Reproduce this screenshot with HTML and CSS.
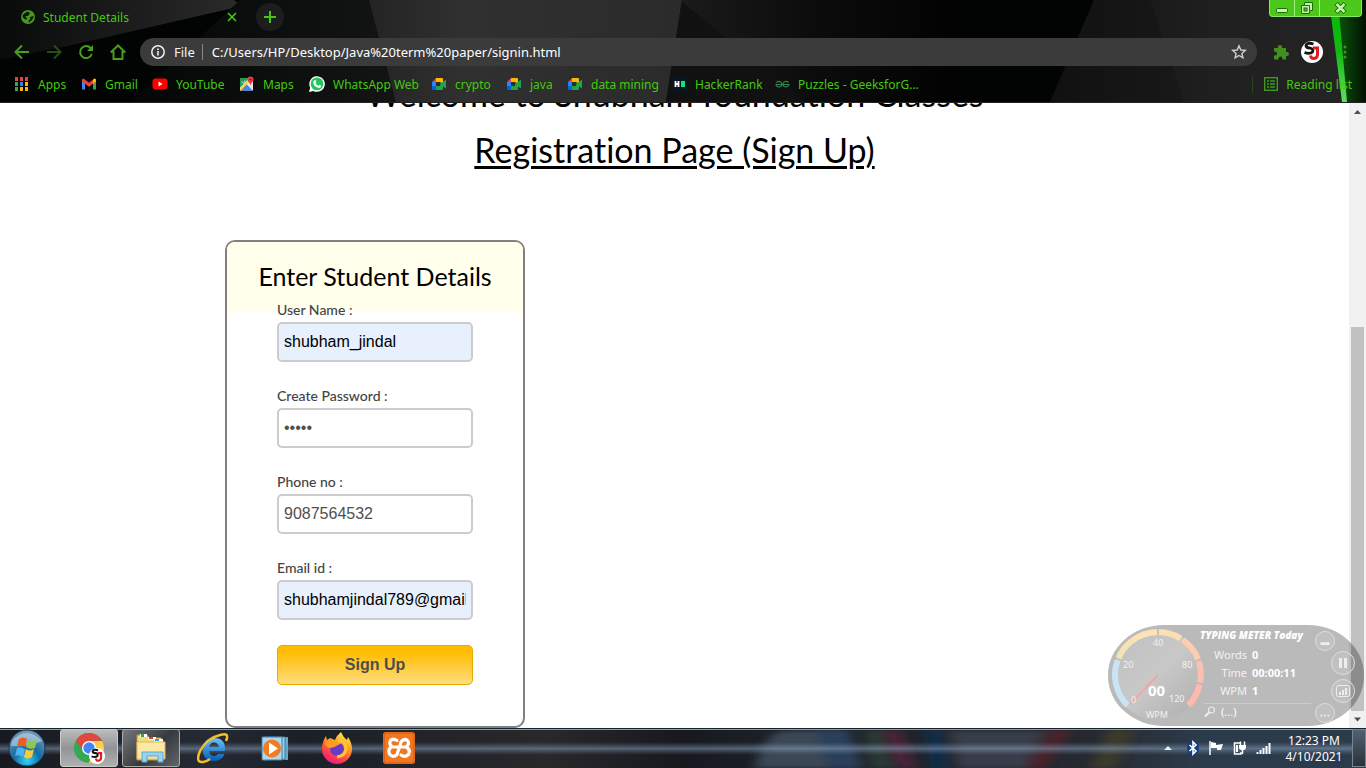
FILE: index.html
```html
<!DOCTYPE html>
<html lang="en">
<head>
<meta charset="utf-8">
<title>Student Details</title>
<link rel="stylesheet" href="styles.css">
</head>
<body>
<header class="browser">
  <svg class="theme" viewBox="0 0 1366 103" preserveAspectRatio="none" aria-hidden="true">
    <defs>
      <linearGradient id="tl" x1="0" x2="1"><stop offset="0" stop-color="#090a0a"/><stop offset="1" stop-color="#2b2b2b"/></linearGradient>
      <linearGradient id="mid" x1="0" x2="1"><stop offset="0" stop-color="#242424"/><stop offset=".3" stop-color="#303030"/><stop offset="1" stop-color="#2b2b2b"/></linearGradient>
      <linearGradient id="dark" x1="0" x2="1"><stop offset="0" stop-color="#1c1c1c"/><stop offset=".5" stop-color="#0c0c0c"/><stop offset="1" stop-color="#020202"/></linearGradient>
      <linearGradient id="right" x1="0" x2="1"><stop offset="0" stop-color="#111"/><stop offset=".5" stop-color="#1f1f1f"/><stop offset="1" stop-color="#252525"/></linearGradient>
      <linearGradient id="glow" x1="0" x2="1"><stop offset="0" stop-color="#0a5a0c"/><stop offset="1" stop-color="#021002"/></linearGradient>
      <linearGradient id="left" x1="0" x2="1"><stop offset="0" stop-color="#050606"/><stop offset="1" stop-color="#131515"/></linearGradient>
      <linearGradient id="beam" x1="0" x2="0" y1="0" y2="1"><stop offset="0" stop-color="#08b908"/><stop offset=".5" stop-color="#12b812"/><stop offset="1" stop-color="#5fe05f"/></linearGradient>
    </defs>
    <rect width="1366" height="103" fill="#020303"/>
    <path d="M0 0H234L242 6L70 46L0 60Z" fill="url(#tl)"/>
    <path d="M240 0H372L398 103H130Z" fill="url(#left)"/>
    <path d="M369 0H682L666 103H396Z" fill="url(#mid)"/>
    <path d="M682 0H960V103H666Z" fill="url(#dark)"/>
    <path d="M682 2L805 103H666Z" fill="#111"/>
    <path d="M1094 0H1366V103H1050Z" fill="url(#right)"/>
    <path d="M1150 0L1184 103H1050L1094 0Z" fill="#111" opacity=".35"/>
    <path d="M1336 0H1366V103H1344Z" fill="url(#glow)"/>
    <path d="M1329 0H1338L1347 103H1342Z" fill="url(#beam)"/>
  </svg>
  <div class="tabs">
    <div class="tab">
      <svg width="14" height="14" viewBox="0 0 14 14"><circle cx="7" cy="7" r="7" fill="#46991f"/><path d="M2 4.500L6.500 1.500L9 3L7 6L4 6L6 8L5 10L1.500 7ZM9 7L13 6L11 10L8 12.500L7.500 10.500L9.500 9Z" fill="#0a1508"/></svg>
      <span class="tab-title">Student Details</span>
      <button class="plain" aria-label="Close tab"><svg width="10" height="10" viewBox="0 0 10 10"><path d="M1 1L9 9M9 1L1 9" stroke="#43c911" stroke-width="1.600"/></svg></button>
    </div>
    <button class="new-tab" aria-label="New tab"><svg width="12" height="12" viewBox="0 0 12 12"><path d="M6 0V12M0 6H12" stroke="#43c911" stroke-width="2"/></svg></button>
    <div class="window-buttons">
      <button aria-label="Minimize"><svg width="12" height="12" viewBox="0 0 12 12"><rect x=".5" y="6.500" width="11" height="4" rx="1" fill="#c3f5ad" stroke="#1d6a08"/></svg></button>
      <button aria-label="Restore"><svg width="14" height="14" viewBox="0 0 14 14"><path d="M4.500 1.500H12.500V9.500H9.500V12.500H1.500V4.500H4.500Z" fill="#c3f5ad" stroke="#1d6a08"/><path d="M4.500 4.500H9.500V9.500" fill="none" stroke="#1d6a08"/><rect x="4" y="7" width="3" height="3" fill="#4cc81b" stroke="#1d6a08"/></svg></button>
      <button class="wide" aria-label="Close"><svg width="13" height="12" viewBox="0 0 13 12"><path d="M2 1.500L11 10.500M11 1.500L2 10.500" stroke="#1d6a08" stroke-width="4.500"/><path d="M2.500 2L10.500 10M10.500 2L2.500 10" stroke="#c3f5ad" stroke-width="2.500"/></svg></button>
    </div>
  </div>
  <div class="toolbar">
    <button class="plain" aria-label="Back"><svg width="16" height="16" viewBox="0 0 16 16" fill="none" stroke="#46a01c" stroke-width="2"><path d="M15 8H2M8 1.500L1.500 8L8 14.500"/></svg></button>
    <button class="plain" aria-label="Forward"><svg width="16" height="16" viewBox="0 0 16 16" fill="none" stroke="#255011" stroke-width="2"><path d="M1 8H14M8 1.500L14.500 8L8 14.500"/></svg></button>
    <button class="plain" aria-label="Reload"><svg width="16" height="16" viewBox="0 0 16 16"><path d="M12.700 4.200A6 6 0 1 0 13.800 10" fill="none" stroke="#46a01c" stroke-width="2"/><path d="M15 1V7H9Z" fill="#46a01c"/></svg></button>
    <button class="plain" aria-label="Home"><svg width="16" height="16" viewBox="0 0 16 16" fill="none" stroke="#46a01c" stroke-width="2"><path d="M.8 8.500L8 1.500L15.200 8.500M3.500 7V15H12.500V7"/></svg></button>
    <div class="address">
      <svg width="14" height="14" viewBox="0 0 14 14"><circle cx="7" cy="7" r="6.200" fill="none" stroke="#eee" stroke-width="1.500"/><path d="M7 6V10.500M7 3.500V5" stroke="#eee" stroke-width="1.600"/></svg>
      <span class="scheme">File</span>
      <input class="url" aria-label="Address" value="C:/Users/HP/Desktop/Java%20term%20paper/signin.html">
      <button class="plain" aria-label="Bookmark"><svg width="16" height="16" viewBox="0 0 16 16"><path d="M8 1.800L9.800 6L14.300 6.400L10.900 9.400L11.900 13.900L8 11.500L4.100 13.900L5.100 9.400L1.700 6.400L6.200 6Z" fill="none" stroke="#d0d0d0" stroke-width="1.400"/></svg></button>
    </div>
    <div class="tools">
      <button class="plain" aria-label="Extensions"><svg width="16" height="16" viewBox="0 0 16 16"><path d="M1 4H5V3A2 2 0 0 1 9 3V4H13V8H14A2 2 0 0 1 14 12H13V15.500H9.500V14.500A1.800 1.800 0 0 0 5.500 14.500V15.500H1V11.500H2A1.800 1.800 0 0 0 2 7.500H1Z" fill="#429020"/></svg></button>
      <button class="plain" aria-label="Profile"><svg width="22" height="22" viewBox="0 0 22 22"><use href="#sj"/></svg></button>
      <button class="plain" aria-label="Menu"><svg width="4" height="16" viewBox="0 0 4 16" fill="#3c951c"><circle cx="2" cy="3" r="1.500"/><circle cx="2" cy="8" r="1.500"/><circle cx="2" cy="13" r="1.500"/></svg></button>
    </div>
  </div>
  <nav class="bookmarks">
    <div class="links">
      <a href="#"><svg width="16" height="16" viewBox="0 0 16 16"><path d="M1 1h3v4H1zM6 1h3v4H6zM11 1h3v4h-3z" fill="#e8413a"/><path d="M1 6h3v4H1zM1 11h3v4H1z" fill="#34a853"/><path d="M6 6h3v4H6z" fill="#2d83f5"/><path d="M11 6h3v4h-3zM6 11h3v4H6zM11 11h3v4h-3z" fill="#f8b908"/></svg>Apps</a>
      <a href="#"><svg width="16" height="16" viewBox="0 0 16 16"><path d="M1 4V13.500H4V7Z" fill="#4285f4"/><path d="M15 4V13.500H12V7Z" fill="#34a853"/><path d="M1 3.500L2.500 2.500L8 6.800L13.500 2.500L15 3.500V5.500L8 10.800L1 5.500Z" fill="#ea4335"/><path d="M12 3.700L13.500 2.500L15 3.500V5.500L12 7.800Z" fill="#fbbc04"/></svg>Gmail</a>
      <a href="#"><svg width="16" height="16" viewBox="0 0 16 16"><rect x=".5" y="2.500" width="15" height="11" rx="3" fill="#f00"/><path d="M6.500 5.500L10.500 8L6.500 10.500Z" fill="#fff"/></svg>YouTube</a>
      <a href="#"><svg width="16" height="16" viewBox="0 0 16 16"><path d="M1 2H14V14.500H1Z" fill="#e6e6e6"/><path d="M1 2H10L1 12Z" fill="#249d5a"/><path d="M3 5.500A1.500 1.500 0 1 0 5.500 4.500" fill="none" stroke="#d8eee0" stroke-width="1"/><path d="M1 14.500L7 7.500L13.500 14.500Z" fill="#4285f4"/><path d="M1 11.500L9 4L10.500 5.500L2 14.500H1Z" fill="#fbd24c"/><path d="M8.500 3.500A3 3 0 0 1 14.500 3.500C14.500 6 12 6.500 11.600 10C11.200 6.500 8.500 6 8.500 3.500Z" fill="#ea4335"/><circle cx="11.500" cy="3.500" r="1.100" fill="#791c16"/></svg>Maps</a>
      <a href="#"><svg width="16" height="16" viewBox="0 0 16 16"><path d="M0 16L1.200 11.800A7.800 7.800 0 1 1 4.300 14.900Z" fill="#fff"/><circle cx="8" cy="7.900" r="6.400" fill="#22c55e"/><path d="M5.200 4.200L6.500 4L7.300 6L6.500 7Q7.500 9 9.500 9.800L10.400 8.800L12.300 9.800Q12 12 10 12Q5 11 4.200 6.500Q4.200 5 5.200 4.200Z" fill="#fff"/></svg>WhatsApp Web</a>
      <a href="#"><svg width="16" height="16" viewBox="0 0 16 16"><use href="#meet"/></svg>crypto</a>
      <a href="#"><svg width="16" height="16" viewBox="0 0 16 16"><use href="#meet"/></svg>java</a>
      <a href="#"><svg width="16" height="16" viewBox="0 0 16 16"><use href="#meet"/></svg>data mining</a>
      <a href="#"><svg width="14" height="16" viewBox="0 0 14 16"><rect y="1" width="14" height="14" fill="#091728"/><path d="M2.500 5V11M5.500 5V11M2.500 8H5.500" stroke="#fff" stroke-width="1.800"/><path d="M8 5h4v6H8z" fill="#10e86b"/></svg>HackerRank</a>
      <a href="#"><svg width="15" height="16" viewBox="0 0 15 16" fill="none" stroke="#32854b" stroke-width="1.200"><path d="M1.500 6.500Q3 5 5 5.500Q7 6.500 7 8.500Q6.500 11 4 11Q1.500 11 1 8.500H14Q13.500 11 11 11Q8.500 11 8 8.500Q8 6.500 10 5.500Q12 5 13.500 6.500"/></svg>Puzzles - GeeksforG...</a>
    </div>
    <a class="reading" href="#"><svg width="14" height="14" viewBox="0 0 14 14" fill="none" stroke="#3d9a1c"><rect x=".7" y=".7" width="12.600" height="12.600" stroke-width="1.400"/><path d="M3 4H5M6 4H11M3 7H5M6 7H11M3 10H5M6 10H11" stroke-width="1.600"/></svg>Reading list</a>
  </nav>
</header>

<div class="viewport">
  <main class="page">
    <h1>Welcome to Shubham foundation Classes</h1>
    <h1 class="underlined">Registration Page (Sign Up)</h1>
    <form class="card">
      <h2>Enter Student Details</h2>
      <div class="fields">
        <div class="field"><label for="user">User Name :</label><input class="filled" id="user" type="text" value="shubham_jindal"></div>
        <div class="field"><label for="pass">Create Password :</label><input id="pass" type="password" value="abcde"></div>
        <div class="field"><label for="phone">Phone no :</label><input id="phone" type="text" value="9087564532"></div>
        <div class="field"><label for="email">Email id :</label><input class="filled" id="email" type="text" value="shubhamjindal789@gmail.com"></div>
        <button class="submit" type="button">Sign Up</button>
      </div>
    </form>
  </main>
  <div class="scrollbar" aria-hidden="true">
    <svg width="17" height="17" viewBox="0 0 17 17"><path d="M5 11H12L8.500 7Z" fill="#505050"/></svg>
    <div class="track"><div class="thumb"></div></div>
    <svg width="17" height="17" viewBox="0 0 17 17"><path d="M5 6.500H12L8.500 10.500Z" fill="#505050"/></svg>
  </div>
  <aside class="meter">
    <svg width="96" height="100" viewBox="0 0 96 100">
      <defs><linearGradient id="face" x1="0" y1="0" x2="1" y2="1"><stop offset="0" stop-color="#fff" stop-opacity=".1"/><stop offset=".5" stop-color="#fff" stop-opacity=".2"/><stop offset="1" stop-color="#777" stop-opacity=".15"/></linearGradient></defs>
      <circle cx="50" cy="50" r="45" fill="url(#face)"/>
      <g fill="none" stroke-width="6">
        <path d="M19.600 80.400A43 43 0 0 1 9.600 35.300" stroke="#c9e5f3"/>
        <path d="M10.400 33.200A43 43 0 0 1 24 15.800" stroke="#f5e3b8"/>
        <path d="M24 15.800A43 43 0 0 1 49 7" stroke="#fde3b4"/>
        <path d="M51 7A43 43 0 0 1 72.800 13.500" stroke="#fddfb4"/>
        <path d="M74.600 14.800A43 43 0 0 1 90 34" stroke="#fccdb0"/>
        <path d="M90.700 36A43 43 0 0 1 92 57.500" stroke="#fdbfb0"/>
        <path d="M91.600 59.500A43 43 0 0 1 80.400 80.400" stroke="#fdb9ae"/>
      </g>
      <path d="M50 50L22 79" stroke="#ff9c9c" stroke-width="1.600"/>
      <g class="dial-text"><text x="45" y="21">40</text><text x="15" y="43">20</text><text x="74" y="43">80</text><text x="61" y="77">120</text><text x="23" y="78">0</text><text x="38" y="93">WPM</text></g>
      <text class="dial-value" x="40" y="71">00</text>
    </svg>
    <div class="stats">
      <strong class="stats-title">TYPING METER Today</strong>
      <dl><dt>Words</dt><dd>0</dd><dt>Time</dt><dd>00:00:11</dd><dt>WPM</dt><dd>1</dd></dl>
      <div class="search"><svg width="12" height="12" viewBox="0 0 12 12" fill="none" stroke="#eee"><circle cx="7.500" cy="4" r="3" stroke-width="1.200"/><path d="M5 6.500L1 10.500" stroke-width="2"/></svg>(...)</div>
    </div>
    <div class="controls">
      <button aria-label="Minimize meter"><svg width="18" height="18" viewBox="0 0 20 20"><path d="M5 13H15" stroke="#eee" stroke-width="3"/></svg></button>
      <button class="outer" aria-label="Pause"><svg width="20" height="20" viewBox="0 0 20 20"><path d="M7.500 5V15M12.500 5V15" stroke="#eee" stroke-width="3"/></svg></button>
      <button class="outer" aria-label="Statistics"><svg width="20" height="20" viewBox="0 0 20 20"><rect x="3.500" y="4.500" width="13" height="11" rx="2" fill="none" stroke="#eee"/><path d="M7 11V14M10 9V14M13 7V14" stroke="#eee" stroke-width="2"/></svg></button>
      <button aria-label="More"><svg width="18" height="18" viewBox="0 0 20 20"><path d="M5 13H7M9 13H11M13 13H15" stroke="#eee" stroke-width="2"/></svg></button>
    </div>
  </aside>
</div>

<footer class="taskbar">
  <svg class="glass" viewBox="0 0 1366 40" preserveAspectRatio="none" aria-hidden="true">
    <defs>
      <filter id="soft" x="-20%" y="-20%" width="140%" height="140%"><feGaussianBlur stdDeviation="6 2"/></filter>
      <linearGradient id="shine" x1="0" y1="0" x2="0" y2="1"><stop offset="0" stop-color="#7890b0" stop-opacity="0"/><stop offset=".5" stop-color="#91abc8" stop-opacity=".7"/><stop offset="1" stop-color="#7890b0" stop-opacity="0"/></linearGradient>
      <linearGradient id="base" x1="0" x2="1"><stop offset="0" stop-color="#17191f"/><stop offset=".15" stop-color="#262a33"/><stop offset=".22" stop-color="#1b2027"/><stop offset=".4" stop-color="#29282b"/><stop offset=".5" stop-color="#17191f"/><stop offset=".6" stop-color="#20242c"/><stop offset=".8" stop-color="#26292f"/><stop offset=".88" stop-color="#2c3b4b"/><stop offset="1" stop-color="#2c3b4c"/></linearGradient>
    </defs>
    <rect width="1366" height="40" fill="url(#base)"/>
    <g filter="url(#soft)">
      <path d="M755 40Q765 3 785 3H835Q845 20 840 40Z" fill="#3a4655"/>
      <path d="M815 2H848L862 40H828Z" fill="#29405a"/>
      <path d="M866 2H880L892 40H872Z" fill="#2c3a35"/>
      <path d="M883 2H900L915 40H898Z" fill="#4c2238"/>
      <path d="M905 2H922L935 40H920Z" fill="#1c2029"/>
      <path d="M925 2H940L950 40H932Z" fill="#102e48"/>
      <path d="M950 3H1045L1025 40H960Z" fill="#383c48"/>
      <path d="M1050 2H1072L1045 40H1025Z" fill="#48242c"/>
      <path d="M1108 2H1135L1115 40H1090Z" fill="#3a3b2a"/>
    </g>
    <rect y="14" width="1366" height="13" fill="url(#shine)" opacity=".7"/>
    <rect width="1366" height="1" fill="#14232e"/><rect y="1" width="1366" height="1" fill="#8e9cab"/>
  </svg>
  <div class="apps">
    <button class="start" aria-label="Start"><svg width="38" height="38" viewBox="0 0 38 38">
      <defs><radialGradient id="orb" cx=".5" cy=".85" r=".8"><stop offset="0" stop-color="#35d2fb"/><stop offset=".45" stop-color="#126ca4"/><stop offset="1" stop-color="#7496b8"/></radialGradient></defs>
      <circle cx="19" cy="19" r="18" fill="url(#orb)" stroke="#173650"/><path d="M4 12Q19-4 34 12Q20 18 3 17Z" fill="#cfe1ef" opacity=".55"/>
      <path d="M11 10Q15 7 19 10L17 18Q13 15 9 18Z" fill="#ef5a27"/><path d="M20 11Q24 14 29 11L27 19Q22 21 18 18Z" fill="#91c84c"/><path d="M9 19Q12 17 17 20L15 28Q11 25 7 27Z" fill="#4fb4ea"/><path d="M18 20Q22 23 26 20L24 28Q19 31 16 28Z" fill="#fcca38"/></svg></button>
    <button class="task active" aria-label="Chrome"><svg width="32" height="32" viewBox="0 0 32 32"><circle cx="16" cy="16" r="15" fill="#34a853"/><path d="M3 8.500A15 15 0 0 1 29 8.500L30 10H16A7 7 0 0 0 9.500 18Z" fill="#df493d"/><path d="M16 9H29.300A15 15 0 0 1 15.500 31L22.500 19Z" fill="#fccf45"/><circle cx="16" cy="16" r="7" fill="#fff"/><circle cx="16" cy="16" r="5.700" fill="#4285f4"/><use href="#sj" transform="translate(16 16) scale(.73)"/></svg></button>
    <button class="task open" aria-label="File Explorer"><svg width="34" height="32" viewBox="0 0 34 32"><path d="M3 3H13L15 6H27L29 9V28H3Z" fill="#f6d978" stroke="#ba9645"/><path d="M6 2H13V5H6Z" fill="#fff"/><path d="M7 2h3v3H7z" fill="#34a634"/><path d="M14 5H22V8H14Z" fill="#fff"/><path d="M15 5h4v2h-4z" fill="#e53935"/><path d="M20 7H29V10H20Z" fill="#fff"/><path d="M21 7h4v2h-4z" fill="#409bdc"/><path d="M3 10H31V27H3Z" fill="#fbe9a5" stroke="#d9b95d"/><path d="M8 20H29V30H24V24H13V30H8Z" fill="#9bd3ef" stroke="#5ba6cf"/></svg></button>
    <button class="task" aria-label="Internet Explorer"><svg width="32" height="32" viewBox="0 0 32 32"><defs><linearGradient id="ie" x1="0" y1="0" x2="0" y2="1"><stop offset="0" stop-color="#67c5f5"/><stop offset="1" stop-color="#075bb5"/></linearGradient></defs><path d="M28 19H12Q13 24 17 24Q20 24 21 22H27.500Q25 29 17 29Q6 29 6 18Q6 6 17 6Q29 6 28 19ZM12 15H22Q21 10.500 17 10.500Q13 10.500 12 15Z" fill="url(#ie)" fill-rule="evenodd"/><path d="M29 9Q33 0 23 3Q10 6 3 19Q-2 31 6 30Q9 30 13 27" fill="none" stroke="#f5bd2c" stroke-width="2.500"/></svg></button>
    <button class="task" aria-label="Media Player"><svg width="30" height="28" viewBox="0 0 30 28"><path d="M6 4L28 3V26L6 25Z" fill="#65a9cc"/><path d="M4 3L25 3V25L4 26Z" fill="#9bcfe8" stroke="#437da3"/><path d="M2 3H22V26H2Z" fill="#aed7ec" stroke="#427da2"/><circle cx="12" cy="14.500" r="9" fill="#f07c25"/><path d="M9 8.500L18 14.500L9 20.500Z" fill="#fff"/></svg></button>
    <button class="task" aria-label="Firefox"><svg width="32" height="32" viewBox="0 0 32 32"><defs><linearGradient id="fx" x1=".8" y1="0" x2=".3" y2="1"><stop offset="0" stop-color="#fff44f"/><stop offset=".4" stop-color="#ff9b24"/><stop offset=".7" stop-color="#ff4742"/><stop offset="1" stop-color="#e9168c"/></linearGradient></defs><path d="M20 0Q22 5 26 8L27 5Q31 11 31 17A15 15 0 0 1 1 17Q1 10 5 4L6 8L9 6L14 8Q16 3 20 0Z" fill="url(#fx)"/><circle cx="16" cy="17" r="7" fill="#693ac6"/><path d="M4 10Q9 7 14 10Q18 9 21 11L17 13Q13 16 9 16Q4 15 4 10Z" fill="#ff9b22"/><path d="M17 9Q25 8 25 17Q24 24 16 25" fill="none" stroke="#ffc630" stroke-width="3"/></svg></button>
    <button class="task" aria-label="XAMPP"><svg width="32" height="32" viewBox="0 0 32 32"><rect width="32" height="32" rx="3" fill="#f17821"/><rect x="1" y="1" width="30" height="30" rx="2" fill="none" stroke="#ce5718"/><path d="M14 8.500Q10 6 7.500 8.500Q5.500 12 9 14.500Q4.500 17 6.500 22Q10 26.500 14 22.500L15.500 18L18 10Q21 6 24.500 8.500Q27 12 23 15Q28 17.500 25.500 22.500Q22 26 18 23M9 15H23" fill="none" stroke="#fff" stroke-width="3.200" stroke-linecap="round" stroke-linejoin="round"/></svg></button>
  </div>
  <div class="tray">
    <svg width="8" height="8" viewBox="0 0 8 8"><path d="M0 6L4 2L8 6Z" fill="#eee"/></svg>
    <svg width="14" height="16" viewBox="0 0 14 16"><ellipse cx="7" cy="8" rx="6" ry="7.500" fill="#123f80"/><path d="M3.500 5L10 11L7 14V2L10 5L3.500 11" fill="none" stroke="#fff" stroke-width="1.600"/></svg>
    <svg width="16" height="16" viewBox="0 0 16 16"><path d="M2 1V15" stroke="#fff" stroke-width="1.500"/><path d="M3 2L8 3V5L15 4L13 10H9V8H3Z" fill="#fff"/></svg>
    <svg width="16" height="16" viewBox="0 0 16 16"><path d="M8 3H2.500V14H9V12" fill="none" stroke="#fff" stroke-width="1.500"/><path d="M4 5H6V12H4Z" fill="#fff"/><path d="M7 5H14V7Q14 10 11.500 10H9.500Q7 10 7 7Z" fill="#fff"/><path d="M8.500 1.500V5M12.500 1.500V5M10.500 10V14" stroke="#fff" stroke-width="1.500"/></svg>
    <svg width="16" height="16" viewBox="0 0 16 16"><path d="M1.500 12V14M4.500 10V14M7.500 8V14M10.500 6V14M13.500 3V14" stroke="#fff" stroke-width="2"/></svg>
  </div>
  <div class="clock"><time>12:23 PM</time><time>4/10/2021</time></div>
  <button class="show-desktop" aria-label="Show desktop"></button>
</footer>

<svg class="symbols" aria-hidden="true">
  <symbol id="sj" viewBox="0 0 22 22" width="22" height="22"><circle cx="11" cy="11" r="11" fill="#fff"/><path d="M12.500 3Q6 1 5 4.500Q5 7 9 7Q13 8 11.500 11Q9 13.500 3.500 11.500" fill="none" stroke="#151515" stroke-width="2.800"/><path d="M12 7H16.500V14Q16 17.500 12.500 17.500Q10 17.500 9.500 14.500" fill="none" stroke="#df1c22" stroke-width="3"/></symbol>
  <symbol id="meet" viewBox="0 0 16 16" width="16" height="16"><path d="M1 6L5 2V6Z" fill="#ea4335"/><path d="M1 6H5V10H1Z" fill="#2684fc"/><path d="M1 10H5V14H2.500Q1 14 1 12.500Z" fill="#0066da"/><path d="M5 2H11Q12 2 12 3V8L9 6H5Z" fill="#fbb905"/><path d="M5 10H9V8L15 3.500V12.500L12 10.500V13Q12 14 11 14H5Z" fill="#1fa34b"/></symbol>
</svg>
</body>
</html>
```

FILE: styles.css
```css
* { box-sizing: border-box; }
body { margin: 0; height: 100vh; display: flex; flex-direction: column; overflow: hidden; background: #fff; font-family: "Noto Sans", sans-serif; font-size: 12px; }
svg { display: block; flex: none; }
button { font: inherit; cursor: pointer; }
a { color: inherit; text-decoration: none; }
.symbols { position: absolute; width: 0; height: 0; }
.plain { padding: 0; border: 0; background: none; }

.browser { position: relative; z-index: 1; flex: none; color: #43c911; border-bottom: 1px solid #222; }
.theme { position: absolute; inset: 0; width: 100%; height: 100%; z-index: -1; }
.tabs { display: flex; height: 34px; align-items: center; padding-left: 8px; }
.tab { width: 232px; display: flex; align-items: center; gap: 8px; padding: 0 3px 0 13px; }
.tab-title { flex: 1; }
.new-tab { width: 28px; height: 28px; margin-left: 16px; padding: 8px; border: 0; border-radius: 50%; background: #1c1e1d; }
.window-buttons { align-self: flex-start; margin-left: auto; margin-right: 4px; display: flex; height: 17px; background: #4cc81b; border: 1px solid #86e95e; border-top: 0; border-radius: 0 0 4px 4px; }
.window-buttons button { width: 25px; padding: 0; border: 0; border-right: 1px solid #a0ef7b; background: none; display: grid; place-items: center; }
.window-buttons .wide { width: 41px; border: 0; }
.toolbar { display: flex; align-items: center; gap: 16px; height: 36px; padding: 0 19px 0 14px; }
.address { flex: 1; display: flex; align-items: center; height: 28px; margin-left: -2px; padding: 0 10px 0 11px; border-radius: 14px; background: #3b3b3b; color: #f4f4f4; font-size: 13px; }
.scheme { margin-left: 9px; padding-right: 7px; border-right: 1px solid #888; line-height: 16px; }
.url { flex: 1; min-width: 0; padding: 0 0 0 9px; border: 0; outline: 0; background: none; color: #fff; font: inherit; }
.tools { display: flex; align-items: center; gap: 12px; }
.tools button:last-child { margin-left: 8px; }
.bookmarks { display: flex; align-items: center; height: 32px; padding: 0 14px 4px 14px; }
.links { flex: 1; display: grid; grid-template-columns: 67px 71px 87px 70px 122px 75px 61px 106px 102px auto; justify-content: start; }
.links a, .reading { display: flex; align-items: center; gap: 8px; white-space: nowrap; }
.reading { padding-left: 11px; border-left: 1px solid #25451b; }

.viewport { position: relative; flex: 1; min-height: 0; display: flex; overflow: hidden; }
.page { flex: 1; font-family: Lato, sans-serif; font-variant-ligatures: none; }
h1 { margin: 0; font-size: 34px; line-height: 56px; font-weight: 400; text-align: center; }
.page h1:first-child { margin-top: -37px; }
.underlined { text-decoration: underline; text-decoration-thickness: 3px; text-underline-offset: 3px; }
.card { width: 300px; margin: 62px 0 0 225px; border: 2px solid #808080; border-radius: 10px; overflow: hidden; }
.card h2 { margin: 0; height: 69px; padding-top: 18px; background: #ffffec; font-size: 25px; font-weight: 400; line-height: 32px; text-align: center; white-space: nowrap; }
.fields { margin-top: -10px; padding: 0 50px 41px; }
.field { margin-bottom: 25px; }
.field label { display: block; margin-bottom: 4px; color: #444; font-size: 14px; font-weight: 500; line-height: 17px; }
.field input { display: block; width: 100%; height: 40px; padding: 0 5px; border: 2px solid #ccc; border-radius: 5px; color: #4f4f4f; font-family: "Liberation Sans", Arial, sans-serif; font-size: 16px; outline: 0; background: #fff; }
.field .filled { background: #e8f0fe; color: #000; }
.submit { display: block; width: 100%; height: 40px; border: 1px solid #e5a900; border-radius: 5px; background: linear-gradient(#ffbc00 15%, #ffdd7f); color: #4e4d4b; font: bold 16px "Liberation Sans", Arial, sans-serif; }
.scrollbar { width: 17px; display: flex; flex-direction: column; background: #f1f1f1; }
.track { flex: 1; display: flex; flex-direction: column; justify-content: flex-end; padding: 0 2px; }
.thumb { height: 65%; background: #c1c1c1; }

.meter { position: absolute; right: 2px; bottom: 2px; width: 256px; height: 101px; display: flex; border-radius: 56px / 50px; background: rgba(0, 0, 0, .27); color: #fff; overflow: hidden; font-size: 11px; }
.dial-text { fill: #f2f2f2; font-size: 9px; }
.dial-value { fill: #fff; font-size: 15px; font-weight: 700; }
.stats { width: 107px; padding-top: 2px; }
.stats-title { display: block; margin-left: -4px; font-family: "Open Sans", sans-serif; font-size: 10px; font-style: italic; font-weight: 800; line-height: 16px; white-space: nowrap; }
.stats dl { display: grid; grid-template-columns: 43px 1fr; column-gap: 5px; margin: 3px 0 0; line-height: 18px; }
.stats dt { text-align: right; color: #f2f2f2; }
.stats dd { margin: 0; font-weight: 700; }
.search { display: flex; align-items: center; gap: 5px; margin-top: 3px; border-top: 1px solid #ccc; line-height: 16px; }
.controls { display: flex; flex-direction: column; align-items: flex-start; padding: 6px 0 0 4px; }
.controls button { width: 20px; height: 20px; padding: 0; display: grid; place-items: center; border: 1px solid #ddd; border-radius: 50%; background: rgba(255, 255, 255, .1); }
.controls .outer { width: 24px; height: 24px; margin-left: 16px; }
.controls .outer + .outer { margin-top: 4px; }

.taskbar { position: relative; flex: none; height: 40px; display: flex; align-items: center; color: #fff; z-index: 1; }
.glass { position: absolute; inset: 0; width: 100%; height: 100%; z-index: -1; }
.apps { flex: 1; display: flex; align-items: center; gap: 4px; padding-left: 8px; }
.start { width: 38px; height: 38px; margin-right: 10px; padding: 0; border: 0; background: none; }
.task { width: 58px; height: 38px; padding: 0; display: grid; place-items: center; border: 1px solid transparent; border-radius: 3px; background: none; }
.active { border-color: #ccc; background: linear-gradient(#bcbcbc, #919396 50%, #b0b0b0); }
.open { border-color: #aaa; background: linear-gradient(135deg, #76787b, #36393d 55%, #62666b); }
.tray { display: flex; align-items: center; gap: 8px; }
.tray svg:first-child { margin-right: 6px; }
.clock { width: 80px; display: flex; flex-direction: column; align-items: center; padding: 2px 0 0 4px; line-height: 16px; }
.show-desktop { width: 14px; height: 38px; padding: 0; border: 1px solid #788592; background: linear-gradient(#536170, #29323a); }
```
